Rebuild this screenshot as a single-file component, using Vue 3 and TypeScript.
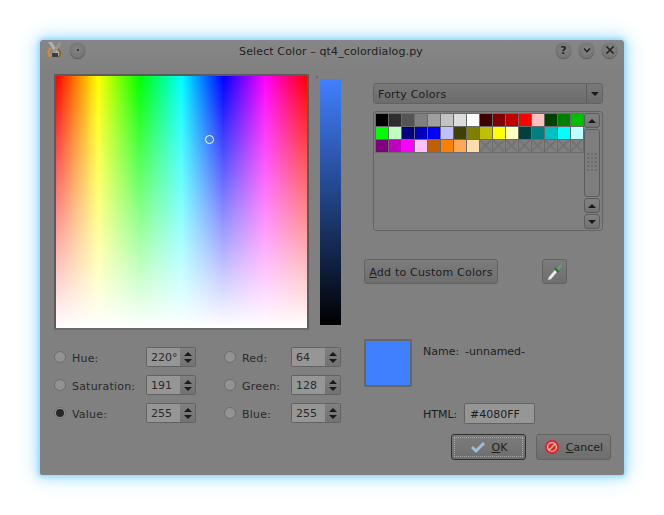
<script setup lang="ts">
const colors: string[] = [
  "#000000", "#2e2e2e", "#555555", "#808080", "#a0a0a0", "#c3c3c3", "#dcdcdc", "#ffffff",
  "#400000", "#800000", "#c00000", "#ff0000", "#ffc0c0", "#004000", "#008000", "#00c000",
  "#00ff00", "#c0ffc0", "#000080", "#0000c0", "#0000ff", "#c0c0ff", "#404000", "#808000",
  "#c0c000", "#ffff00", "#ffffc0", "#004040", "#008080", "#00c0c0", "#00ffff", "#c0ffff",
  "#800080", "#c000c0", "#ff00ff", "#ffc0ff", "#c06000", "#ff8000", "#ffa858", "#ffdca8",
];
const emptyCells = 8;

const leftFields = [
  { label: "Hue:", value: "220°", checked: false },
  { label: "Saturation:", value: "191", checked: false },
  { label: "Value:", value: "255", checked: true },
];
const rightFields = [
  { label: "Red:", value: "64" },
  { label: "Green:", value: "128" },
  { label: "Blue:", value: "255" },
];
</script>

<template>
  <div class="page">
    <div class="window">
      <div class="titlebar">
        <svg class="app-icon" width="16" height="16" viewBox="0 0 16 16">
          <path d="M1 0 L5 0 L14 14 L10 14 Z" fill="#b0b0b0" />
          <path d="M15 1 L12 0 L2 14 L6 14 Z" fill="#969696" />
          <path d="M4 6 C0.5 8 1 12 3 15" fill="none" stroke="#e08a20" stroke-width="2" />
          <path d="M11 7 C14 9 14 12 12 15" fill="none" stroke="#8a6a20" stroke-width="2" />
          <path d="M5 11 L11 11 L11 15 L5 15 Z" fill="#3c3c3c" />
        </svg>
        <span class="round-btn pin"><i></i></span>
        <span class="title">Select Color – qt4_colordialog.py</span>
        <span class="round-btn help">?</span>
        <span class="round-btn">
          <svg width="10" height="10" viewBox="0 0 10 10"><path d="M2 3.5 L5 6.5 L8 3.5" fill="none" stroke="#222" stroke-width="1.6" /></svg>
        </span>
        <span class="round-btn">
          <svg width="10" height="10" viewBox="0 0 10 10"><path d="M1.5 1.5 L8.5 8.5 M8.5 1.5 L1.5 8.5" fill="none" stroke="#222" stroke-width="1.7" /></svg>
        </span>
      </div>

      <div class="content">
        <div class="left">
          <div class="picker-row">
            <div class="picker">
              <div class="cross"></div>
            </div>
            <div class="value-wrap">
              <div class="value-mark"></div>
              <div class="value-bar"></div>
            </div>
          </div>

          <div class="fields">
            <div class="field-col first">
              <div v-for="f in leftFields" :key="f.label" class="field">
                <span class="radio" :class="{ checked: f.checked }"></span>
                <span class="field-label">{{ f.label }}</span>
                <div class="spin">
                  <span class="spin-value">{{ f.value }}</span>
                  <span class="spin-arrows"><b class="up"></b><b class="down"></b></span>
                </div>
              </div>
            </div>
            <div class="field-col second">
              <div v-for="f in rightFields" :key="f.label" class="field">
                <span class="radio"></span>
                <span class="field-label">{{ f.label }}</span>
                <div class="spin">
                  <span class="spin-value">{{ f.value }}</span>
                  <span class="spin-arrows"><b class="up"></b><b class="down"></b></span>
                </div>
              </div>
            </div>
          </div>
        </div>

        <div class="right">
          <div class="combo">
            <span class="combo-text">Forty Colors</span>
            <span class="combo-arrow"><b class="down"></b></span>
          </div>

          <div class="palette">
            <div class="cells">
              <span v-for="c in colors" :key="c" class="cell" :style="{ background: c }"></span>
              <span v-for="n in emptyCells" :key="n" class="cell empty">
                <svg width="13" height="13" viewBox="0 0 13 13"><path d="M1 1 L12 12 M12 1 L1 12" stroke="#737373" stroke-width="2" /></svg>
              </span>
            </div>
            <div class="scrollbar">
              <span class="sb-btn"><b class="up"></b></span>
              <span class="sb-slider">
                <span class="grip"><i v-for="n in 15" :key="n"></i></span>
              </span>
              <span class="sb-btn"><b class="up"></b></span>
              <span class="sb-btn"><b class="down"></b></span>
            </div>
          </div>

          <div class="custom-row">
            <button class="btn add"><u>A</u>dd to Custom Colors</button>
            <button class="btn dropper">
              <svg width="18" height="20" viewBox="0 0 18 20">
                <path d="M2 18 L3 15 L9 8 L11 10 L5 17 Z" fill="#eeeeee" stroke="#bdbdbd" stroke-width=".5" />
                <path d="M8 7 L12 11 L13.5 9.5 L9.5 5.5 Z" fill="#2f6f35" />
                <path d="M11 7 L13.5 3 C14.5 1.5 16.5 3.5 15.3 5 L12.5 8.5 Z" fill="#5aa85f" />
              </svg>
            </button>
          </div>

          <div class="info-row">
            <div class="swatch"></div>
            <div class="info">
              <div class="name-line">
                <span class="info-label">Name:</span>
                <span>-unnamed-</span>
              </div>
            </div>
          </div>

          <div class="html-row">
            <span class="html-label">HTML:</span>
            <span class="html-input">#4080FF</span>
          </div>

          <div class="actions">
            <button class="btn action default">
              <span class="focus-ring">
                <svg width="16" height="14" viewBox="0 0 16 14"><path d="M2 7 L6 11 L14 3" fill="none" stroke="#9dbdd8" stroke-width="3" /></svg>
                <span class="action-text"><u>O</u>K</span>
              </span>
            </button>
            <button class="btn action">
              <span class="focus-ring plain">
                <svg width="16" height="16" viewBox="0 0 16 16">
                  <circle cx="8" cy="8" r="7" fill="#d42a2a" />
                  <circle cx="8" cy="8" r="4.4" fill="none" stroke="#f3b0a8" stroke-width="1.4" />
                  <path d="M4.8 11.2 L11.2 4.8" stroke="#f3b0a8" stroke-width="1.6" />
                </svg>
                <span class="action-text"><u>C</u>ancel</span>
              </span>
            </button>
          </div>
        </div>
      </div>
    </div>
  </div>
</template>

<style>
html, body { background: #ffffff; margin: 0; }
</style>

<style scoped>
.page {
  width: 664px;
  height: 515px;
  padding: 40px;
  box-sizing: border-box;
  background: #ffffff;
  font-family: "DejaVu Sans", sans-serif;
  font-size: 11px;
  color: #1d1d1d;
  overflow: hidden;
}
.window {
  width: 584px;
  height: 435px;
  background: #808080;
  border-radius: 4px 4px 2px 2px;
  box-shadow: 0 0 4px 1px #8cd6ff, 0 0 12px 2px #a8e0ff, 0 0 26px 3px #cfeeff;
  display: flex;
  flex-direction: column;
}
.titlebar {
  height: 34px;
  display: flex;
  align-items: center;
  padding: 0 7px 14px 7px;
  box-sizing: border-box;
  gap: 8px;
  background: linear-gradient(#868686, #808080);
  border-radius: 4px 4px 0 0;
}
.app-icon { flex: none; }
.title {
  flex: 1;
  text-align: center;
  padding-left: 21px;
  margin-top: 3px;
  color: #222;
  letter-spacing: 0.12px;
}
.round-btn {
  width: 15px;
  height: 15px;
  border-radius: 50%;
  background: radial-gradient(circle at 50% 40%, #848484, #6e6e6e);
  box-shadow: 0 0 1px #4a4a4a, 0 1px 1px #5a5a5a;
  display: flex;
  align-items: center;
  justify-content: center;
  font-size: 11px;
  font-weight: bold;
  color: #222;
  flex: none;
}
.round-btn.pin { margin-left: -1px; }
.round-btn.pin i { width: 2px; height: 2px; background: #222; border-radius: 50%; }

.content { display: flex; flex: 1; padding-left: 14px; }
.left { width: 287px; flex: none; }
.right { width: 247px; margin-left: 23px; flex: none; }

.picker-row { display: flex; }
.picker {
  width: 251px;
  height: 252px;
  border: 2px solid #5b5b5b;
  border-bottom-color: #6a6a6a;
  border-radius: 2px;
  position: relative;
  background:
    linear-gradient(to bottom, rgba(255, 255, 255, 0), #ffffff),
    linear-gradient(to right, #ff0000, #ffff00 16.67%, #00ff00 33.33%, #00ffff 50%, #0000ff 66.67%, #ff00ff 83.33%, #ff0000);
}
.cross {
  position: absolute;
  left: 149px;
  top: 59px;
  width: 7px;
  height: 7px;
  border: 1px solid #ffffff;
  border-radius: 50%;
}
.value-wrap { margin-left: 11px; padding-top: 5px; position: relative; }
.value-mark {
  position: absolute;
  left: -4px;
  top: 1px;
  border-left: 3px solid #6a6a6a;
  border-top: 2px solid transparent;
  border-bottom: 2px solid transparent;
}
.value-bar {
  width: 21px;
  height: 246px;
  background: linear-gradient(to bottom, #4080ff, #000000);
}

.fields { display: flex; margin-top: 17px; }
.field-col { display: flex; flex-direction: column; gap: 8px; }
.field-col.first { width: 142px; }
.field-col.second { margin-left: 28px; width: 118px; }
.field { display: flex; align-items: center; height: 20px; }
.field-col.first .field-label { width: 74px; }
.field-col.second .field-label { width: 49px; }
.radio {
  width: 12px;
  height: 12px;
  border-radius: 50%;
  background: #939393;
  border: 1px solid #6c6c6c;
  box-sizing: border-box;
  margin-right: 6px;
  display: flex;
  align-items: center;
  justify-content: center;
  flex: none;
}
.radio.checked::after {
  content: "";
  width: 8px;
  height: 8px;
  border-radius: 50%;
  background: #262626;
}
.field-label { color: #2a2a2a; flex: none; letter-spacing: 0.2px; padding-top: 2px; }
.spin {
  width: 50px;
  height: 20px;
  display: flex;
  border: 1px solid #626262;
  border-radius: 2px;
  box-sizing: border-box;
  background: #727272;
  flex: none;
}
.spin-value {
  width: 33px;
  background: #969696;
  padding-left: 4px;
  box-sizing: border-box;
  line-height: 20px;
  color: #2a2a2a;
  flex: none;
}
.spin-arrows {
  flex: 1;
  display: flex;
  flex-direction: column;
  align-items: center;
  justify-content: space-around;
  padding: 2px 0;
  box-sizing: border-box;
  background: linear-gradient(#808080, #727272);
}
b.up, b.down { display: block; width: 0; height: 0; border-left: 4px solid transparent; border-right: 4px solid transparent; }
b.up { border-bottom: 4px solid #1a1a1a; }
b.down { border-top: 4px solid #1a1a1a; }

.combo {
  margin: 9px 8px 0 9px;
  height: 21px;
  box-sizing: border-box;
  border: 1px solid #636363;
  border-radius: 3px;
  background: linear-gradient(#797979, #6c6c6c);
  display: flex;
  align-items: center;
  justify-content: space-between;
}
.combo-text { padding: 1px 0 0 4px; letter-spacing: 0.2px; }
.combo-arrow {
  width: 15px;
  height: 19px;
  border-left: 1px solid #5c5c5c;
  display: flex;
  align-items: center;
  justify-content: center;
}
.palette {
  margin: 7px 8px 0 9px;
  height: 120px;
  box-sizing: border-box;
  border: 1px solid #636363;
  border-radius: 3px;
  display: flex;
  justify-content: space-between;
  padding: 1px;
}
.cells {
  width: 208px;
  display: grid;
  grid-template-columns: repeat(16, 13px);
  grid-auto-rows: 13px;
  align-content: start;
  border-right: 1px solid #6a6a6a;
  background: #6a6a6a;
  height: 39px;
  margin-bottom: auto;
  padding-bottom: 1px;
}
.cell { display: block; width: 12px; height: 12px; margin: 1px 0 0 1px; overflow: hidden; }
.cell.empty { background: #808080; }
.cell.empty svg { display: block; margin: -1px; }
.scrollbar { width: 16px; display: flex; flex-direction: column; gap: 1px; margin-right: 1px; }
.sb-btn, .sb-slider {
  border: 1px solid #5c5c5c;
  border-radius: 3px;
  box-sizing: border-box;
  background: linear-gradient(#828282, #747474);
  display: flex;
  align-items: center;
  justify-content: center;
}
.sb-btn { height: 15px; }
.sb-slider { flex: 1; background: #7e7e7e; align-items: flex-start; padding-top: 23px; }
.grip { display: grid; grid-template-columns: repeat(3, 2px); gap: 2px; }
.grip i { display: block; width: 2px; height: 2px; background: #6a6a6a; }

.custom-row { display: flex; margin-top: 28px; }
.btn {
  font: inherit;
  color: #1d1d1d;
  border: 1px solid #626262;
  border-radius: 3px;
  background: linear-gradient(#7c7c7c, #6e6e6e);
  padding: 0;
  box-sizing: border-box;
}
.add { width: 134px; height: 25px; padding-top: 2px; letter-spacing: 0.2px; }
.dropper {
  width: 25px;
  height: 25px;
  margin-left: 44px;
  display: flex;
  align-items: center;
  justify-content: center;
}
.info-row { display: flex; margin-top: 55px; }
.swatch {
  width: 48px;
  height: 48px;
  box-sizing: border-box;
  background: #4080ff;
  border: 2px solid #666666;
  border-radius: 2px;
}
.info { margin-left: 11px; padding-top: 6px; }
.name-line { display: flex; }
.info-label { width: 42px; }
.html-row { display: flex; align-items: center; margin: 16px 0 0 59px; }
.html-label { width: 41px; padding-top: 2px; }
.html-input {
  width: 71px;
  height: 21px;
  box-sizing: border-box;
  border: 1px solid #636363;
  border-radius: 2px;
  background: #969696;
  padding-left: 5px;
  line-height: 21px;
}
.actions { display: flex; justify-content: flex-end; gap: 10px; margin-top: 10px; }
.action { width: 75px; height: 26px; padding: 2px; }
.action.default { border-color: #2e2e2e; }
.focus-ring {
  display: flex;
  align-items: center;
  justify-content: center;
  gap: 6px;
  height: 100%;
  border: 1px dotted #a8a8a8;
  box-sizing: border-box;
}
.focus-ring.plain { border-color: transparent; }
.action-text { padding-top: 1px; }
</style>
